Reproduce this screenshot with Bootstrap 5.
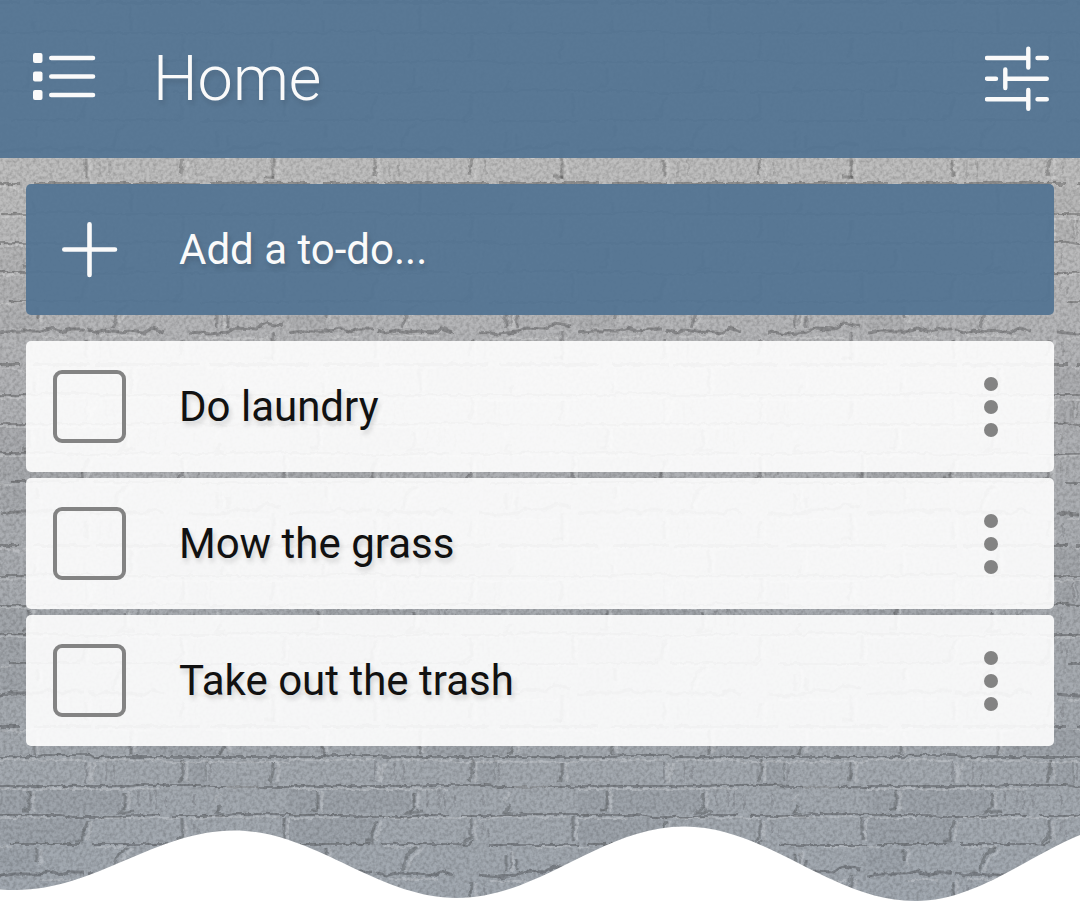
<!DOCTYPE html>
<html lang="en">
<head>
<meta charset="utf-8">
<meta name="viewport" content="width=device-width, initial-scale=1">
<title>Home</title>
<link href="https://cdn.jsdelivr.net/npm/bootstrap@5.3.0/dist/css/bootstrap.min.css" rel="stylesheet">
<style>
  body { font-family: Roboto, "Liberation Sans", sans-serif; background: #fff; }
  .wall { background: linear-gradient(#c0bfbe 0, #bebebe 180px, #b2b3b6 380px, #a7abb0 620px, #a1a8b0 100%); }
  .wall-texture { z-index: 0; }
  .app-bar { height: 158px; padding: 0 31px 2px 32px; background: rgba(83, 116, 146, .95); z-index: 1; }
  .app-title { font-size: 63px; line-height: 76px; font-weight: 300; color: #fafafa; padding: 2px 0 0 57px; text-shadow: 2px 4px 5px rgba(0, 0, 0, .12); }
  .todo-main { padding: 26px 26px 0; z-index: 1; }
  .todo-row { height: 131px; padding: 0 26px 0 27px; border-radius: 5px; background: rgba(255, 255, 255, .9); }
  .todo-new { background: rgba(83, 116, 146, .95); margin-bottom: 26px; }
  .todo-list-gap { gap: 6px; }
  .todo-text, .todo-entry, .todo-entry::placeholder { font-size: 42px; line-height: 52px; text-shadow: 2px 4px 5px rgba(0, 0, 0, .15); }
  .todo-text { color: #111; padding-left: 53px; }
  .todo-entry, .todo-entry:focus { color: #fafafa; padding: 0 0 0 53px; background: transparent; border: 0; box-shadow: none; }
  .todo-entry::placeholder { color: #fafafa; opacity: 1; }
  .form-check-input.todo-check { width: 73px; height: 73px; border: 4px solid #838383; border-radius: 9px; background-color: transparent; }
  .form-check-input.todo-check:checked { background-color: #587894; }
  .wave-space { height: 156px; z-index: 1; }
  .wave-space svg { height: 80px; }
</style>
</head>
<body>
<div class="wall position-relative overflow-hidden">

  <svg class="wall-texture position-absolute top-0 start-0 w-100 h-100" aria-hidden="true">
    <defs>
      <pattern id="bricks" width="289" height="181" y="1" patternUnits="userSpaceOnUse">
        <!-- joint shadows -->
        <g fill="none" stroke="#000" stroke-opacity=".24" stroke-width="2">
          <path d="M0 1H20M34 1H90M96 1H200M210 1H289" stroke-width="4"/>
          <path d="M0 32H36l6-2H90l4 2H289"/>
          <path d="M0 61H130l8-1H200l10 2H289"/>
          <path d="M0 90H60l14 2H116l20-2H160M172 91H225l8-2H289"/>
          <path d="M10 119H80M92 119H165l14 1 4-4M200 120H289"/>
          <path d="M0 151l14-2H40l10-3 12 4 8-3H84M88 148l10 3 8-3 14 2 10-1 14 2 8-5 12 4M190 150l20 2 18-2 8-4 20 1 10-6 16 3" stroke-width="3"/>
        </g>
        <g fill="none" stroke="#000" stroke-opacity=".2" stroke-width="3">
          <path d="M34 20V30M131 4V30M224 22l-4 8M183 34V48l-3 9M273 38v10l-3 9M29 66V84M125 68V82l-6 6 16-2M221 80l-5 8 8 1M284 92V116"/>
          <path d="M88 96L83 108V116H76M182 94V112l-8 7M37 124V136M128 122l-10 8-5 16M217 130V146M228 134V146M183 158l-3 16M273 150V178M86 158V176"/>
          <path d="M86 36V58" stroke-width="1"/>
          <path d="M22 85H29M264 176H274"/>
        </g>
        <!-- lit mortar edges -->
        <g fill="none" stroke="#fff" stroke-opacity=".18" stroke-width="2">
          <path d="M0 5H12L20 8 32 4H50M96 5H150M206 5H289M0 35H86M98 36L106 35H160l6 2H289M0 64H160M226 62H260M0 93H50M96 93H182M190 94L212 92H280M0 122H12M96 122H130M246 122H282M40 155H70M100 154H150M200 156H270"/>
          <path d="M38 6V28M135 6V28M229 6V28M90 37V58L96 38M187 37V57M278 37V57M33 66V86M129 66V84M220 68l-5 8M288 93V116M92 96L87 116M186 96V116M41 124V140M133 124l-10 8-6 14M224 126V146M90 154V178M187 158V178M278 154V178" stroke-width="3"/>
        </g>
        <g fill="none" stroke="#000" stroke-opacity=".08" stroke-width="2">
          <path d="M138 66v16M150 64v18M156 66v18M166 70v14M194 70V80M206 38V56M210 38V56M106 38V56M114 40V54M194 98V108M200 104V112M222 128V144M100 160V176M110 160V176M196 160V174"/>
        </g>
        <path d="M0 65H29V90H0ZM34 65H122V88H34ZM0 94H86V119H0ZM0 124H37V146H0ZM188 37H207V60H188ZM138 5H222V30H138Z" fill="#000" fill-opacity=".03"/>
      </pattern>
      <filter id="rough" x="0" y="0" width="100%" height="100%" color-interpolation-filters="sRGB">
        <feTurbulence type="fractalNoise" baseFrequency=".14" numOctaves="2" seed="4" result="n"/>
        <feDisplacementMap in="SourceGraphic" in2="n" scale="5" xChannelSelector="R" yChannelSelector="G"/>
        <feGaussianBlur stdDeviation=".7"/>
      </filter>
      <filter id="grain" x="0" y="0" width="100%" height="100%" color-interpolation-filters="sRGB">
        <feTurbulence type="fractalNoise" baseFrequency=".3" numOctaves="2" seed="9"/>
        <feColorMatrix values="0 0 0 0 0  0 0 0 0 0  0 0 0 0 0  .35 0 0 0 -.13"/>
        <feGaussianBlur stdDeviation=".5"/>
      </filter>
    </defs>
    <rect width="100%" height="100%" fill="url(#bricks)" filter="url(#rough)"/>
    <rect width="100%" height="100%" filter="url(#grain)"/>
  </svg>

  <header class="app-bar position-relative d-flex align-items-center">
    <button type="button" class="btn p-0 border-0 lh-1" aria-label="Lists">
      <svg class="d-block" width="64" height="64" viewBox="32 46 64 64" fill="#fafafa">
        <rect x="33" y="53" width="9.500" height="10" rx="2"/><rect x="33" y="71.500" width="9.500" height="10" rx="2"/><rect x="33" y="90" width="9.500" height="10" rx="2"/>
        <path d="M51.300 58H93M51.300 76.500H93M51.300 95H93" stroke="#fafafa" stroke-width="4.600" stroke-linecap="round"/>
      </svg>
    </button>
    <h1 class="app-title mb-0 flex-grow-1">Home</h1>
    <button type="button" class="btn p-0 border-0 lh-1" aria-label="Settings">
      <svg class="d-block" width="64" height="66" viewBox="985 45 64 66" fill="none" stroke="#fafafa" stroke-width="4.400" stroke-linecap="round">
        <path d="M987 58H1028M1037.500 58H1046.800M1028.300 48.800V67.500M987 78.700H996M1005.300 69.500V88M1005.300 78.700H1046.800M987 99.300H1028M1037.500 99.300H1046.800M1028.300 90V108.700"/>
      </svg>
    </button>
  </header>

  <main class="todo-main position-relative">
    <form class="todo-row todo-new d-flex align-items-center" onsubmit="return false">
      <svg class="flex-shrink-0" width="73" height="73" viewBox="0 0 73 73" fill="none" stroke="#fafafa" stroke-width="4.600" stroke-linecap="round" aria-hidden="true"><path d="M36.500 11.300V62M11.300 36.500H62"/></svg>
      <input type="text" class="form-control todo-entry" placeholder="Add a to-do..." aria-label="Add a to-do">
    </form>

    <ul class="list-unstyled mb-0 d-flex flex-column todo-list-gap">
      <li class="todo-row d-flex align-items-center">
        <input class="form-check-input todo-check m-0 flex-shrink-0" type="checkbox" id="t1">
        <label class="todo-text flex-grow-1" for="t1">Do laundry</label>
        <button type="button" class="btn p-0 border-0" aria-label="More"><svg class="d-block" width="74" height="74" viewBox="0 0 74 74" fill="#838383"><circle cx="37" cy="14" r="7"/><circle cx="37" cy="37" r="7"/><circle cx="37" cy="60" r="7"/></svg></button>
      </li>
      <li class="todo-row d-flex align-items-center">
        <input class="form-check-input todo-check m-0 flex-shrink-0" type="checkbox" id="t2">
        <label class="todo-text flex-grow-1" for="t2">Mow the grass</label>
        <button type="button" class="btn p-0 border-0" aria-label="More"><svg class="d-block" width="74" height="74" viewBox="0 0 74 74" fill="#838383"><circle cx="37" cy="14" r="7"/><circle cx="37" cy="37" r="7"/><circle cx="37" cy="60" r="7"/></svg></button>
      </li>
      <li class="todo-row d-flex align-items-center">
        <input class="form-check-input todo-check m-0 flex-shrink-0" type="checkbox" id="t3">
        <label class="todo-text flex-grow-1" for="t3">Take out the trash</label>
        <button type="button" class="btn p-0 border-0" aria-label="More"><svg class="d-block" width="74" height="74" viewBox="0 0 74 74" fill="#838383"><circle cx="37" cy="14" r="7"/><circle cx="37" cy="37" r="7"/><circle cx="37" cy="60" r="7"/></svg></button>
      </li>
    </ul>
  </main>

  <div class="wave-space position-relative d-flex align-items-end">
    <svg class="w-100 d-block" viewBox="0 822 1080 80" preserveAspectRatio="none" aria-hidden="true">
      <path fill="#fff" d="M0 889.500Q8 890 16 890C95 890 156 830.500 234 830.500C315 830.500 376 898 457 898C540 898 601 826.500 684 826.500C768 826.500 831 901 915 901C997 901 1058 822 1140 822V903H0Z"/>
    </svg>
  </div>
</div>
<script src="https://cdn.jsdelivr.net/npm/bootstrap@5.3.0/dist/js/bootstrap.bundle.min.js"></script>
</body>
</html>
